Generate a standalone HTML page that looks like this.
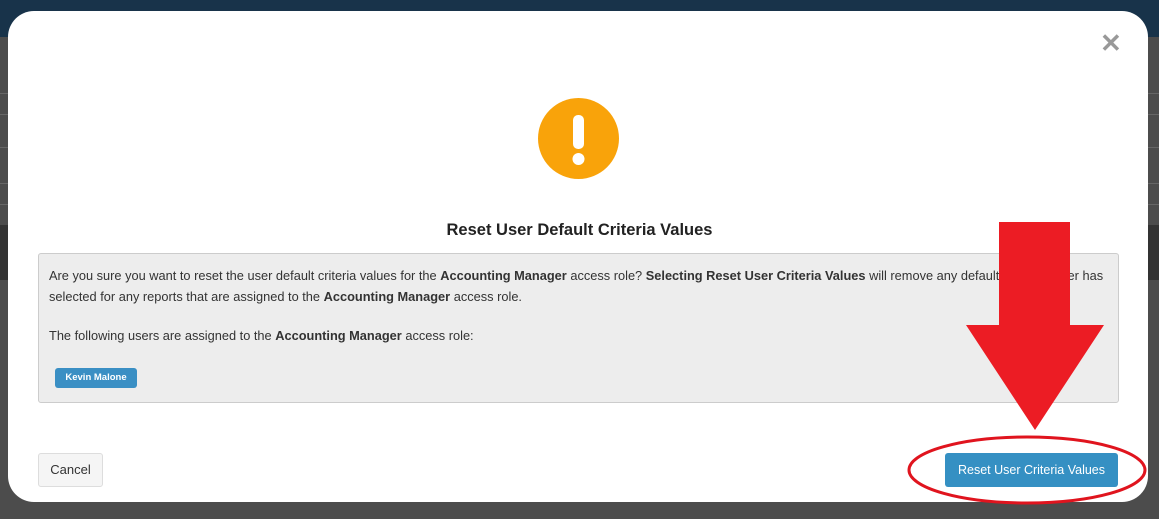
<!DOCTYPE html>
<html><head><style>
body{margin:0;width:1159px;height:519px;overflow:hidden;background:#4c4c4c;font-family:"Liberation Sans",sans-serif;position:relative}
.top{position:absolute;left:0;top:0;width:1159px;height:37px;background:#18334a}
.line{position:absolute;left:0;width:1159px;height:1px;background:#666}
.band{position:absolute;left:0;top:225px;width:1159px;height:55px;background:#333}
.modal{position:absolute;left:8px;top:11px;width:1140px;height:491px;background:#fff;border-radius:26px}
.x{position:absolute;left:1100px;top:28px;font-size:26px;color:#999;font-weight:bold}
.icon{position:absolute;left:538px;top:98px;width:81px;height:81px;border-radius:50%;background:#f9a30a}
h2{position:absolute;left:0;top:221px;width:1159px;margin:0;text-align:center;font-size:16.5px;color:#222;font-weight:bold}
.box{position:absolute;left:38px;top:253px;width:1079px;height:148px;background:#ededed;border:1px solid #ccc;border-radius:3px;font-size:12.8px;color:#333}
.box p{margin:0;position:absolute;left:10px;line-height:21px;white-space:nowrap}
.badge{position:absolute;left:16px;top:114px;width:82px;height:20px;background:#3a8fc4;border-radius:3px;color:#fff;font-size:9.5px;font-weight:bold;text-align:center;line-height:20px}
.cancel{position:absolute;left:38px;top:453px;width:63px;height:32px;border:1px solid #ddd;border-radius:3px;background:#f5f5f5;color:#333;font-size:13px;text-align:center;line-height:32px}
.btn{position:absolute;left:945px;top:453px;width:173px;height:34px;background:#3590c3;border-radius:3px;color:#fff;font-size:12.5px;text-align:center;line-height:34px}
</style></head><body>
<div class="top"></div>
<div class="line" style="top:93px"></div><div class="line" style="top:114px"></div><div class="line" style="top:147px"></div><div class="line" style="top:183px"></div><div class="line" style="top:204px"></div>
<div class="band"></div>
<div class="modal"></div>
<div class="x">✕</div>
<div class="icon"><svg width="81" height="81"><rect x="35" y="17" width="11" height="34" rx="5" fill="#fff"/><circle cx="40.5" cy="61" r="6" fill="#fff"/></svg></div>
<h2>Reset User Default Criteria Values</h2>
<div class="box">
<p style="top:11px">Are you sure you want to reset the user default criteria values for the <b>Accounting Manager</b> access role? <b>Selecting Reset User Criteria Values</b> will remove any default values a user has<br>selected for any reports that are assigned to the <b>Accounting Manager</b> access role.</p>
<p style="top:71px">The following users are assigned to the <b>Accounting Manager</b> access role:</p>
<div class="badge">Kevin Malone</div>
</div>
<div class="cancel">Cancel</div>
<div class="btn">Reset User Criteria Values</div>
<svg style="position:absolute;left:0;top:0" width="1159" height="519">
<polygon points="999,222 1070,222 1070,325 1104,325 1035,430 966,325 999,325" fill="#ec1c24"/>
<ellipse cx="1027" cy="470" rx="118" ry="33" fill="none" stroke="#e0141e" stroke-width="3"/>
</svg>
</body></html>
